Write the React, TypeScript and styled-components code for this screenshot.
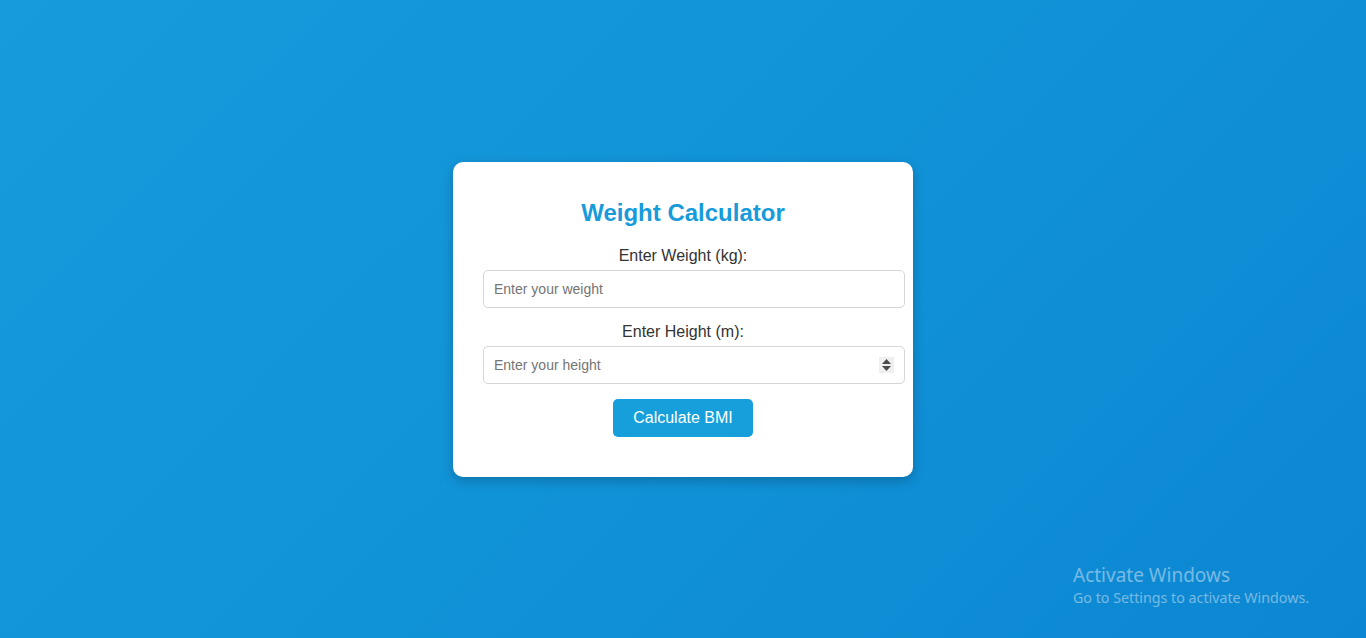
import React from "react";
import styled, { createGlobalStyle } from "styled-components";

const Global = createGlobalStyle`
  html, body { margin: 0; padding: 0; }
  body {
    font-family: "Liberation Sans", Arial, sans-serif;
    background: linear-gradient(135deg, #179bdc 0%, #1193d8 50%, #0c86d2 100%);
    min-height: 100vh;
  }
`;

const Page = styled.div`
  min-height: 100vh;
  height: 638px;
  display: flex;
  align-items: center;
  justify-content: center;
  position: relative;
`;

const Card = styled.div`
  width: 400px;
  padding: 37px 30px 40px;
  background: #fff;
  border-radius: 10px;
  box-shadow: 0 4px 12px rgba(0, 0, 0, 0.22);
  display: flex;
  flex-direction: column;
  align-items: center;
`;

const Title = styled.h2`
  margin: 0 0 20px;
  font-size: 24px;
  font-weight: bold;
  color: #179bdb;
  text-align: center;
`;

const Label = styled.label`
  display: block;
  width: 100%;
  text-align: center;
  font-size: 16px;
  color: #333;
  margin-bottom: 5px;
`;

const Field = styled.div`
  position: relative;
  align-self: flex-start;
  margin-bottom: 15px;
`;

const Input = styled.input`
  box-sizing: border-box;
  width: 422px;
  height: 38px;
  padding: 10px;
  font-family: "Liberation Sans", Arial, sans-serif;
  font-size: 14px;
  color: #333;
  border: 1px solid #d6d6d6;
  border-radius: 5px;
  outline: none;
  background: #fff;
  &::placeholder { color: #757575; }
  &::-webkit-inner-spin-button, &::-webkit-outer-spin-button {
    -webkit-appearance: none;
    margin: 0;
  }
`;

const Spinner = styled.span`
  position: absolute;
  right: 11px;
  top: 11px;
  width: 15px;
  height: 16px;
  background: #efefef;
  display: flex;
  flex-direction: column;
  align-items: center;
  justify-content: center;
  gap: 2px;
`;

const Button = styled.button`
  height: 38px;
  padding: 0 20px;
  font-family: "Liberation Sans", Arial, sans-serif;
  font-size: 16px;
  color: #fff;
  background: #169fdb;
  border: none;
  border-radius: 5px;
  cursor: pointer;
`;

const Watermark = styled.div`
  position: absolute;
  left: 1073px;
  top: 566px;
  font-family: "Noto Sans", "Open Sans", sans-serif;
  color: rgba(225, 235, 245, 0.5);
  line-height: 1;
`;

const WmTitle = styled.div`
  font-size: 19px;
  margin-bottom: 6px;
`;

const WmSub = styled.div`
  font-size: 14.25px;
`;

export default function App() {
  return (
    <>
      <Global />
      <Page>
        <Card>
          <Title>Weight Calculator</Title>
          <Label htmlFor="w">Enter Weight (kg):</Label>
          <Field>
            <Input id="w" type="text" placeholder="Enter your weight" />
          </Field>
          <Label htmlFor="h">Enter Height (m):</Label>
          <Field>
            <Input id="h" type="number" placeholder="Enter your height" />
            <Spinner>
              <svg width="9" height="5" viewBox="0 0 9 5"><path d="M0 5 L4.5 0 L9 5 Z" fill="#4a4a4a" /></svg>
              <svg width="9" height="5" viewBox="0 0 9 5"><path d="M0 0 L4.5 5 L9 0 Z" fill="#4a4a4a" /></svg>
            </Spinner>
          </Field>
          <Button>Calculate BMI</Button>
        </Card>
        <Watermark>
          <WmTitle>Activate Windows</WmTitle>
          <WmSub>Go to Settings to activate Windows.</WmSub>
        </Watermark>
      </Page>
    </>
  );
}
